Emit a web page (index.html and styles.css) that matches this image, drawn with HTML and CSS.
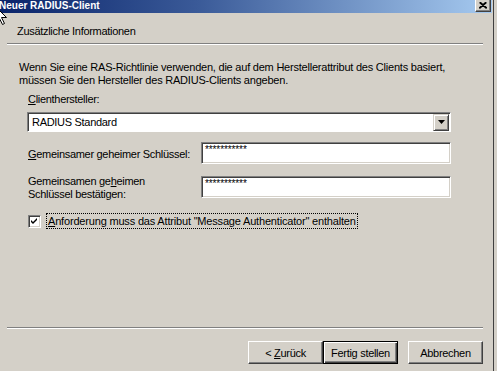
FILE: index.html
```html
<!DOCTYPE html>
<html lang="de">
<head>
<meta charset="utf-8">
<title>Neuer RADIUS-Client</title>
<link rel="stylesheet" href="styles.css">
</head>
<body>
<div class="desktop">
  <div class="window">
    <div class="titlebar">
      <span class="title">Neuer RADIUS-Client</span>
      <span class="close"><svg width="8" height="7" viewBox="0 0 8 7"><path d="M0.5 0.5 L7.5 6.5 M7.5 0.5 L0.5 6.5 M1.5 0.5 L8 6 M6.5 0.5 L0 6" stroke="#000" stroke-width="1.2" fill="none"/></svg></span>
    </div>
    <div class="header">Zusätzliche Informationen</div>
    <div class="sep"></div>
    <div class="content">
      <p class="intro">Wenn Sie eine RAS-Richtlinie verwenden, die auf dem Herstellerattribut des Clients basiert,<br>müssen Sie den Hersteller des RADIUS-Clients angeben.</p>
      <div class="field-label"><u>C</u>lienthersteller:</div>
      <div class="combo">
        <span class="combo-value">RADIUS Standard</span>
        <span class="combo-btn"><svg width="7" height="4" viewBox="0 0 7 4"><path d="M0 0 H7 L3.5 4 Z" fill="#000"/></svg></span>
      </div>
      <div class="form-grid">
        <div class="lbl lbl-center"><u>G</u>emeinsamer geheimer Schlüssel:</div>
        <div class="edit">***********</div>
        <div class="lbl lbl-top">Gemeinsamen ge<u>h</u>eimen<br>Schlüssel bestätigen:</div>
        <div class="edit">***********</div>
      </div>
      <div class="check-row">
        <span class="checkbox"><svg width="7" height="7" viewBox="0 0 7 7"><path d="M0 2 L2 4 L6 0 V2 L2 6 L0 4 Z" fill="#000"/></svg></span>
        <span class="check-label"><u>A</u>nforderung muss das Attribut "Message Authenticator" enthalten</span>
      </div>
    </div>
    <div class="footer">
      <div class="sep sep-bottom"></div>
      <div class="buttons">
        <button class="btn">&lt; <u>Z</u>urück</button>
        <button class="btn btn-default">Fertig stellen</button>
        <button class="btn btn-cancel">Abbrechen</button>
      </div>
    </div>
    <svg class="cursor" width="13" height="21" viewBox="-0.5 -0.5 13 21"><path d="M0 0 V16 L4 12 L7 18 L9 17 L6 11 H11 Z" fill="#fff" stroke="#000" stroke-width="1"/></svg>
  </div>
  <div class="outside"></div>
</div>
</body>
</html>
```
FILE: styles.css
```css
* { box-sizing: border-box; }
html, body { margin: 0; padding: 0; }
body {
  width: 497px;
  height: 371px;
  overflow: hidden;
  background: #D4D0C8;
  font-family: "Liberation Sans", Arial, sans-serif;
  font-size: 11px;
  line-height: 13px;
  letter-spacing: -0.3px;
  color: #000;
}
.desktop { display: flex; height: 371px; }
.window {
  position: relative;
  width: 494px;
  height: 371px;
  background: #D4D0C8;
  border-right: 1px solid #404040;
  display: flex;
  flex-direction: column;
}
.outside { flex: 1; background: #D4D0C8; }
.titlebar {
  height: 13px;
  margin-right: 1px;
  background: linear-gradient(to right, #0A246A 0%, #3A5A98 40%, #A6CAF0 100%);
  display: flex;
  justify-content: space-between;
  align-items: flex-start;
  overflow: visible;
}
.title {
  color: #fff;
  font-weight: bold;
  font-size: 10px;
  line-height: 11px;
  margin-left: -1px;
  letter-spacing: 0;
}
.close {
  width: 16px;
  height: 12px;
  margin-right: 1px;
  background: #D4D0C8;
  border-right: 1px solid #404040;
  border-bottom: 1px solid #404040;
  border-left: 1px solid #fff;
  box-shadow: inset -1px -1px #808080;
  display: flex;
  align-items: center;
  justify-content: center;
  padding-bottom: 1px;
}
.header { padding: 12px 17px 0; height: 30px; }
.sep {
  height: 2px;
  margin: 0 10px 0 7px;
  border-top: 1px solid #808080;
  border-bottom: 1px solid #fff;
}
.content { flex: 1; padding: 0 0 0 28px; }
.intro { margin: 16px 0 0 -9px; letter-spacing: -0.22px; }
.field-label { margin-top: 6px; }
.combo {
  margin: 6px 0 0 -1px;
  width: 424px;
  height: 20px;
  background: #fff;
  border: 1px solid;
  border-color: #808080 #fff #fff #808080;
  box-shadow: inset 1px 1px #404040;
  display: flex;
  align-items: center;
  justify-content: space-between;
  padding: 2px 1px 1px 4px;
}
.combo-value { line-height: 13px; }
.combo-btn {
  width: 16px;
  height: 17px;
  background: #D4D0C8;
  border: 1px solid;
  border-color: #D4D0C8 #404040 #404040 #D4D0C8;
  box-shadow: inset 1px 1px #fff, inset -1px -1px #808080;
  display: flex;
  align-items: center;
  justify-content: center;
  margin-top: -1px;
}
.form-grid {
  display: grid;
  grid-template-columns: 173px 250px;
  grid-template-rows: 22px 22px;
  row-gap: 12px;
  margin-top: 10px;
}
.lbl-center { align-self: center; padding-top: 2px; }
.lbl-top { align-self: start; margin-top: -1px; }
.edit {
  background: #fff;
  border: 1px solid;
  border-color: #808080 #fff #fff #808080;
  box-shadow: inset 1px 1px #404040, inset -1px -1px #D4D0C8;
  padding: 2px 3px;
  font-size: 10px;
  line-height: 10px;
  letter-spacing: -0.1px;
}
.check-row {
  display: flex;
  align-items: center;
  margin-top: 15px;
  height: 16px;
}
.checkbox {
  width: 13px;
  height: 13px;
  background: #fff;
  border: 1px solid;
  border-color: #808080 #fff #fff #808080;
  box-shadow: inset 1px 1px #404040, inset -1px -1px #D4D0C8;
  display: flex;
  align-items: center;
  justify-content: center;
  margin-top: 1px;
}
.check-label {
  margin-left: 5px;
  padding: 1px;
  border: 1px dotted #000;
  line-height: 12px;
  letter-spacing: -0.18px;
}
.sep-bottom { margin-bottom: 12px; }
.buttons {
  display: flex;
  justify-content: flex-end;
  padding: 0 10px 7px 0;
}
.btn {
  width: 75px;
  height: 23px;
  font-family: "Liberation Sans", Arial, sans-serif;
  font-size: 11px;
  letter-spacing: -0.3px;
  color: #000;
  background: #D4D0C8;
  border: 1px solid;
  border-color: #fff #404040 #404040 #fff;
  box-shadow: inset -1px -1px #808080, inset 1px 1px #D4D0C8;
  padding: 0;
  margin: 0;
}
.btn-default {
  border: 1px solid #000;
  box-shadow: inset 1px 1px #fff, inset -1px -1px #404040, inset -2px -2px #808080;
}
.btn-cancel { margin-left: 10px; }
.cursor { position: absolute; left: -5px; top: 6px; }
```
